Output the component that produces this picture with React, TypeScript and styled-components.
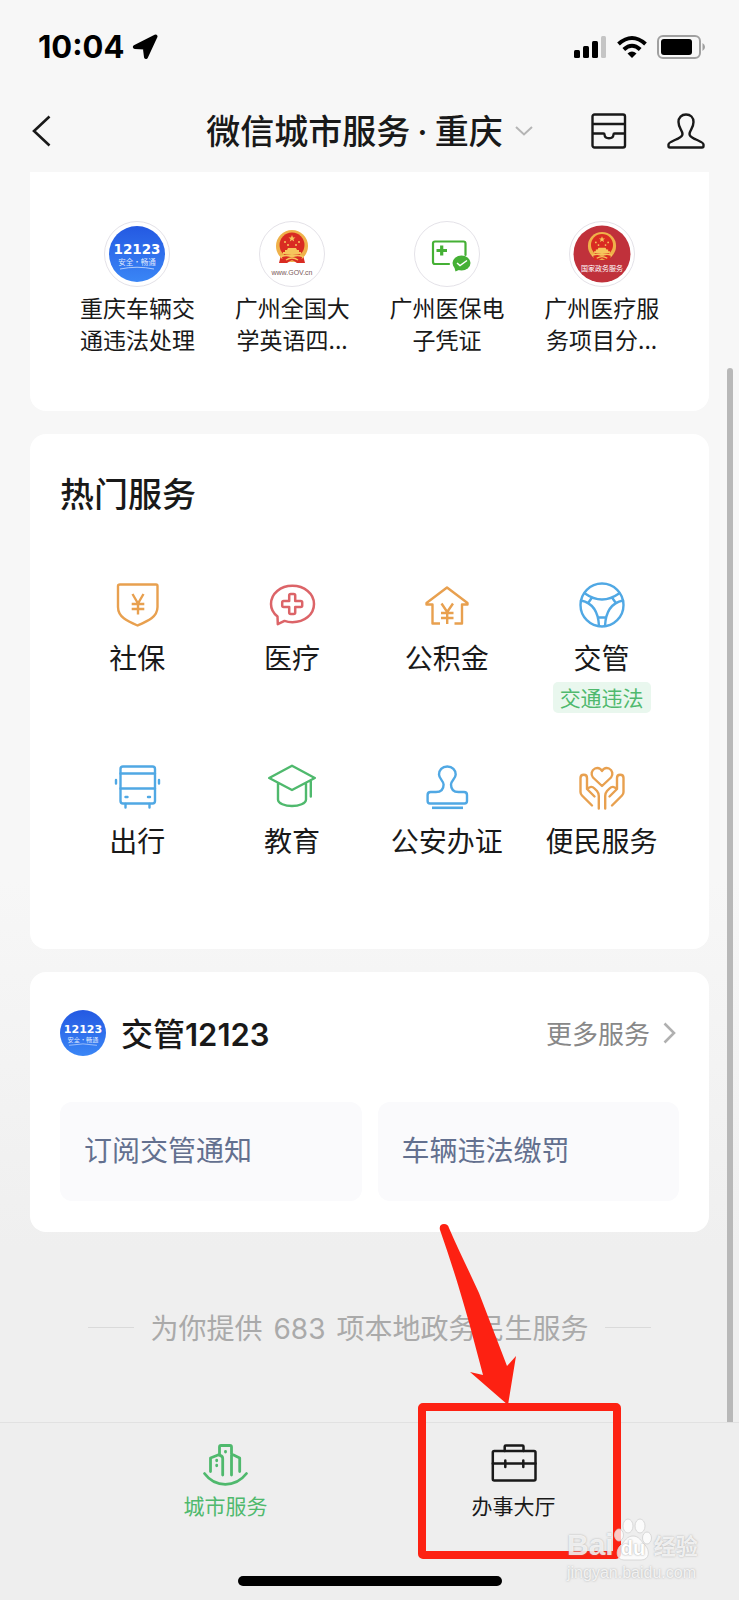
import React from 'react';
import styled, { createGlobalStyle } from 'styled-components';

const cjk = "'Noto Sans CJK SC', 'Liberation Sans', sans-serif";
const latin = "Inter, 'Noto Sans CJK SC', sans-serif";

const colors = {
  ink: '#191919',
  orange: '#e8a04f',
  red: '#dc6468',
  blue: '#50a8e4',
  green: '#4fb96d',
  mark: '#fd2112',
};

const GlobalStyle = createGlobalStyle`
  * { box-sizing: border-box; }
  body { margin: 0; background: #eeeeee; color: ${colors.ink}; font-family: ${cjk}; }
  button { border: 0; padding: 0; margin: 0; background: none; color: inherit; font: inherit; cursor: pointer; }
  a { color: inherit; text-decoration: none; }
  h1, h2, p, ul { margin: 0; padding: 0; }
  ul { list-style: none; }
  svg { display: block; flex: none; }
`;

const Page = styled.div`
  display: flex;
  flex-direction: column;
  min-height: 100vh;
  overflow: hidden;
  background: linear-gradient(#f7f7f7 0, #f7f7f7 55%, #efefef 78%, #efefef 100%);
`;

const StatusBar = styled.div`
  display: flex;
  align-items: center;
  height: 94px;
  padding: 0 34px 0 38px;
`;

const Clock = styled.time`
  font: 700 31px/36px ${latin};
  color: #000;
  margin-right: 7px;
`;

const StatusIcons = styled.div`
  display: flex;
  align-items: center;
  gap: 10px;
  margin-left: auto;
`;

const NavBar = styled.header`
  display: grid;
  grid-template-columns: 1fr auto 1fr;
  align-items: center;
  height: 78px;
  padding: 0 32px 4px;
`;

const NavTitle = styled.h1`
  font-size: 34px;
  line-height: 48px;
  font-weight: 500;
  padding-bottom: 2px;
  span { font-family: ${latin}; margin: 0 7px; line-height: 1; }
`;

const CityButton = styled.button`
  display: flex;
  align-items: center;
  gap: 12px;
`;

const NavActions = styled.div`
  display: flex;
  justify-content: flex-end;
  gap: 40px;
`;

const Content = styled.main`
  position: relative;
  flex: 1;
  padding: 0 30px;
`;

const ScrollThumb = styled.div`
  position: absolute;
  top: 196px;
  bottom: 0;
  right: 6px;
  width: 6px;
  border-radius: 3px 3px 0 0;
  background: #b8b8b8;
`;

const Card = styled.section<{ $pad: string; $flatTop?: boolean }>`
  padding: ${p => p.$pad};
  border-radius: ${p => (p.$flatTop ? '0 0 16px 16px' : '16px')};
  background: #fff;
  & + & { margin-top: 23px; }
`;

const CardTitle = styled.h2`
  font-size: 34px;
  line-height: 48px;
  font-weight: 500;
`;

const Grid = styled.ul`
  display: grid;
  grid-template-columns: repeat(4, 1fr);
  row-gap: 50px;
`;

const HotGrid = styled(Grid)`
  margin-top: 63px;
`;

const Entry = styled.a`
  display: flex;
  flex-direction: column;
  align-items: center;
`;

const RecentLabel = styled.span`
  width: 116px;
  margin-top: 4px;
  font-size: 23px;
  line-height: 32px;
  text-align: center;
`;

const HotLabel = styled.span`
  margin-top: 11px;
  font-size: 28px;
  line-height: 36px;
  white-space: nowrap;
`;

const Tag = styled.span`
  margin-top: 7px;
  padding: 0 7px 1px;
  border-radius: 5px;
  background: #e9f7ee;
  color: ${colors.green};
  font-size: 21px;
  line-height: 30px;
`;

const ServiceHeader = styled.div`
  display: flex;
  align-items: center;
  gap: 15px;
  height: 46px;
`;

const ServiceTitle = styled.h2`
  padding-bottom: 2px;
  font-size: 32px;
  line-height: 44px;
  font-weight: 500;
  span { font-family: ${latin}; font-weight: 600; font-size: 31px; line-height: 1; }
`;

const MoreLink = styled.a`
  display: flex;
  align-items: center;
  gap: 13px;
  margin-left: auto;
  color: #888;
  font-size: 26px;
  line-height: 36px;
`;

const Shortcuts = styled.div`
  display: grid;
  grid-template-columns: 1fr 1fr;
  gap: 16px;
  margin-top: 46px;
`;

const Shortcut = styled.button`
  padding: 27px 24px 32px;
  border-radius: 12px;
  background: #fafafc;
  color: #63708f;
  font-size: 28px;
  line-height: 40px;
  text-align: left;
`;

const Summary = styled.p`
  display: flex;
  align-items: center;
  justify-content: center;
  gap: 16px;
  padding: 75px 0;
  color: #aaa;
  font-size: 28px;
  line-height: 40px;
  white-space: nowrap;
  &::before, &::after { content: ''; width: 46px; height: 1px; background: #dadada; }
  b { font-family: ${latin}; font-weight: 400; line-height: 1; margin: 0 11px; }
`;

const TabBar = styled.nav`
  position: relative;
  display: flex;
  flex-direction: column;
  align-items: center;
  justify-content: space-between;
  height: 178px;
  padding: 18px 0 14px;
  border-top: 1px solid #e1e1e1;
  background: #eeeeee;
`;

const Tabs = styled.div`
  display: grid;
  grid-template-columns: 1fr 1fr;
  width: 78%;
`;

const TabSlot = styled.div`
  position: relative;
  display: flex;
  justify-content: center;
`;

const Tab = styled.button<{ $active?: boolean }>`
  display: flex;
  flex-direction: column;
  align-items: center;
  gap: 4px;
  color: ${p => (p.$active ? colors.green : colors.ink)};
  font-size: 21px;
  line-height: 24px;
`;

const HomeIndicator = styled.div`
  width: 264px;
  height: 10px;
  border-radius: 5px;
  background: #000;
`;

const Pointer = styled.svg`
  position: absolute;
  left: 50%;
  bottom: -42px;
  margin-left: -97px;
  pointer-events: none;
`;

const Watermark = styled.div`
  position: absolute;
  right: 36px;
  bottom: 16px;
  width: 136px;
  color: rgba(255, 255, 255, 0.8);
  text-shadow: 0 0 2px rgba(140, 140, 140, 0.7);
  pointer-events: none;
`;

const Brand = styled.div`
  display: flex;
  align-items: flex-end;
  height: 44px;
  font: 700 30px/34px 'Liberation Sans', sans-serif;
`;

const Paw = styled.span`
  position: relative;
  display: block;
  height: 44px;
  b { position: absolute; left: 7px; bottom: 3px; font-size: 20px; line-height: 22px; color: #fff; text-shadow: 0 0 2px #999; }
`;

const BrandName = styled.span`
  margin-left: 2px;
  font: 700 22px/36px ${cjk};
`;

const Site = styled.div`
  font: 400 16px/22px 'Liberation Sans', sans-serif;
`;

type IconProps = { color?: string; width?: number; children: React.ReactNode };

const LineIcon = ({ color = 'currentColor', width = 2.4, children }: IconProps) => (
  <svg width="48" height="48" viewBox="0 0 48 48" fill="none" stroke={color} strokeWidth={width} strokeLinecap="round" strokeLinejoin="round" aria-hidden="true">
    {children}
  </svg>
);

const SocialIcon = () => (
  <LineIcon color={colors.orange}>
    <path d="M7 4.500H43Q44.500 4.500 44.500 6V27C44.500 37 35 41 24.500 45.500C14 41 5 37 5 27V6Q5 4.500 7 4.500Z" />
    <path d="M19.500 14L25 23.500L30.500 14M18.700 24H31.300M18.700 29H31.300M25 23.500V34.500" strokeLinecap="butt" />
  </LineIcon>
);

const MedicalIcon = () => (
  <LineIcon color={colors.red} width={2.5}>
    <path d="M9.500 36.500C5 33 3 28.500 3 24C3 13.500 12.500 5.800 24.400 5.800S46 13.500 46 24S36.500 42.200 24.400 42.200C21.500 42.200 19 41.800 16.500 40.900L9.800 44.200Z" />
    <path d="M21.200 15.500Q21.200 14 22.700 14H25.700Q27.200 14 27.200 15.500V21H32.700Q34.200 21 34.200 22.500V25.500Q34.200 27 32.700 27H27.200V32.500Q27.200 34 25.700 34H22.700Q21.200 34 21.200 32.500V27H15.700Q14.200 27 14.200 25.500V22.500Q14.200 21 15.700 21H21.200Z" />
  </LineIcon>
);

const FundIcon = () => (
  <LineIcon color={colors.orange}>
    <path d="M17 43.500H9.500V24.500H3.500V23L24 7.500L44.500 23V24.500H39V43.500H31.500" strokeLinecap="butt" />
    <path d="M18.500 23.500L24.200 32L30 23.500M18 33H30.500M18 38H30.500M24.200 32V44" strokeLinecap="butt" />
  </LineIcon>
);

const WheelIcon = () => (
  <LineIcon color={colors.blue}>
    <circle cx="24" cy="25" r="21.500" />
    <path d="M7 13.500Q24 25.500 41 13.500M3 20.500Q20 24 21 46M45 20.500Q28 24 27 46M20.500 37.500H27.500M14 17.500L10.500 22.500M34 17.500L37.500 22.500" />
  </LineIcon>
);

const BusIcon = () => (
  <LineIcon color={colors.blue}>
    <rect x="7.500" y="3.500" width="34.500" height="37" rx="2.500" />
    <path d="M7.500 10.500H42M7.500 25.500H42M3 17V20.500M46 17V20.500M12.500 41V44.500M36.500 41V44.500M12.500 34H14.500M35 34H37" />
  </LineIcon>
);

const EducationIcon = () => (
  <LineIcon color={colors.green}>
    <path d="M24 2.800L46.800 15L24 27L1.200 15ZM10 20.500V36.500C10 40.500 17 43 24 43S38 40.500 38 36.500V20.500M42.800 18.500V33.500" />
  </LineIcon>
);

const StampIcon = () => (
  <LineIcon color={colors.blue}>
    <path d="M24.300 3.500C29.500 3.500 32.700 7 32.700 11.500C32.700 15.500 28 18 28 21.500C28 26.500 31 29 35.500 29H41Q44 29 44 32V38Q44 40.500 41.500 40.500H7Q4.600 40.500 4.600 38V32Q4.600 29 7.600 29H13C17.500 29 20.600 26.500 20.600 21.500C20.600 18 16 15.500 16 11.500C16 7 19 3.500 24.300 3.500Z" />
    <path d="M9 44.800H40" strokeLinecap="butt" strokeWidth="2.600" />
  </LineIcon>
);

const CareIcon = () => (
  <LineIcon color={colors.orange}>
    <path d="M24 23L15 14.500C12.500 11.500 13.500 7 17 5.500C20 4.300 22.500 5.500 24 8C25.500 5.500 28 4.300 31 5.500C34.500 7 35.500 11.500 33 14.500Z" />
    <path d="M14 42.500L4 32.500Q2.500 31 2.500 29V15Q2.500 11.800 5.800 11.800Q9 11.800 9 15V26L16.500 33.500M9.500 26Q13 22 16.500 25.500L19 28Q20.800 30 20.800 33V45.500" />
    <path d="M34 42.500L44 32.500Q45.500 31 45.500 29V15Q45.500 11.800 42.200 11.800Q39 11.800 39 15V26L31.500 33.500M38.500 26Q35 22 31.500 25.500L29 28Q27.200 30 27.200 33V45.500" />
  </LineIcon>
);

const CityIcon = () => (
  <LineIcon width={2.8}>
    <path d="M3.500 32.500Q11.500 43.300 24.300 43.300T45.500 32.500" />
    <path d="M21.700 34V17.500Q21.700 15 19 14.500L17 14L9.500 17V30.500M18.500 13.500V6Q18.500 4.500 20 4.500H29Q30.500 4.500 30.500 6V34M30.500 13L38.700 17V30.500" />
    <path d="M24.500 10.300V11M15.700 19.200V19.800M15.700 24.200V24.800" />
  </LineIcon>
);

const BriefcaseIcon = () => (
  <LineIcon width={2.5}>
    <rect x="2.800" y="10" width="42.700" height="29.500" rx="1.500" />
    <path d="M14.700 10V5.500Q14.700 4.500 15.700 4.500H32.500Q33.500 4.500 33.500 5.500V10M2.800 22.500H45.500M15.300 19.500V26M33.300 19.500V26" />
  </LineIcon>
);

const TrafficLogo = ({ size }: { size: number }) => (
  <svg width={size} height={size} viewBox="0 0 56 56" role="img" aria-label="交管12123">
    <defs>
      <linearGradient id={`sky${size}`} x1="0" y1="0" x2="0" y2="1">
        <stop offset="0" stopColor="#2459e2" />
        <stop offset="1" stopColor="#3a86f6" />
      </linearGradient>
    </defs>
    <circle cx="28" cy="28" r="28" fill={`url(#sky${size})`} />
    <g fill="#fff" textAnchor="middle">
      <text x="28" y="28" fontFamily="DejaVu Sans" fontWeight="700" fontSize="13.500">12123</text>
      <text x="28" y="39" fontFamily="Noto Sans CJK SC" fontSize="7.500" fillOpacity="0.850">安全·畅通</text>
    </g>
    <path d="M11 43Q28 39.500 45 43" fill="none" stroke="#cfe0ff" strokeWidth="0.800" />
  </svg>
);

const Emblem = ({ x, y, s, base }: { x: number; y: number; s: number; base: string }) => (
  <g transform={`translate(${x} ${y}) scale(${s})`}>
    <path d="M-11 9L-13 17H-5L0 14L5 17H13L11 9Z" fill={base} />
    <circle r="16" fill="#efb14a" />
    <circle cy="-1" r="12.500" fill="#d92b22" />
    <path d="M-9 8V6H-7V4H-5L-4 2H4L5 4H7V6H9V8ZM-12 10Q0 6 12 10L10 13Q0 9 -10 13Z" fill="#f6c65c" />
    <path d="M0 -11L1 -8.500H3.500L1.500 -7L2.200 -4.500L0 -6L-2.200 -4.500L-1.500 -7L-3.500 -8.500H-1Z" fill="#f6c65c" />
    <g fill="#f6c65c"><circle cx="-7" cy="-4" r="1" /><circle cx="-4" cy="-1" r="1" /><circle cx="4" cy="-1" r="1" /><circle cx="7" cy="-4" r="1" /></g>
    <path d="M-10 11Q-4 9 0 12Q4 9 10 11L9 16H4L0 14L-4 16H-9Z" fill="#d92b22" />
    <path d="M-6 14Q0 10 6 14" fill="none" stroke="#f6c65c" strokeWidth="1.500" />
  </g>
);

const Badge = ({ children }: { children: React.ReactNode }) => (
  <svg width="66" height="66" viewBox="0 0 66 66" aria-hidden="true">
    <circle cx="33" cy="33" r="32.500" fill="#fff" stroke="#e4e2e8" />
    {children}
  </svg>
);

const recent = [
  {
    name: '重庆车辆交通违法处理',
    icon: <Badge><svg x="5" y="5" width="56" height="56"><TrafficLogo size={56} /></svg></Badge>,
  },
  {
    name: '广州全国大学英语四...',
    icon: (
      <Badge>
        <Emblem x={33} y={25} s={1} base="#d92b22" />
        <text x="33" y="54" textAnchor="middle" fontFamily="Liberation Sans" fontSize="7" fill="#7a5a5a">www.GOV.cn</text>
      </Badge>
    ),
  },
  {
    name: '广州医保电子凭证',
    icon: (
      <Badge>
        <g fill="none" stroke="#45b035" strokeWidth="2.200" strokeLinecap="round">
          <path d="M35 43H21Q19 43 19 41V22.500Q19 20.500 21 20.500H49.500Q51.500 20.500 51.500 22.500V34" />
          <path d="M22.500 29.500H33M27.700 24.500V34.500" strokeWidth="3.200" strokeLinecap="butt" />
        </g>
        <ellipse cx="47.500" cy="42" rx="9" ry="7.500" fill="#45b035" />
        <path d="M40 45L41.500 50.500L47 48Z" fill="#45b035" />
        <path d="M43 42L46 44.500L53 39.500" fill="none" stroke="#fff" strokeWidth="1.500" />
      </Badge>
    ),
  },
  {
    name: '广州医疗服务项目分...',
    icon: (
      <Badge>
        <circle cx="33" cy="33" r="28.500" fill="#c0313b" />
        <Emblem x={33} y={25} s={0.88} base="#c0313b" />
        <text x="33" y="49.500" textAnchor="middle" fontFamily="Noto Sans CJK SC" fontSize="7" fill="#fff">国家政务服务</text>
      </Badge>
    ),
  },
];

const hot = [
  { name: '社保', icon: <SocialIcon /> },
  { name: '医疗', icon: <MedicalIcon /> },
  { name: '公积金', icon: <FundIcon /> },
  { name: '交管', icon: <WheelIcon />, tag: '交通违法' },
  { name: '出行', icon: <BusIcon /> },
  { name: '教育', icon: <EducationIcon /> },
  { name: '公安办证', icon: <StampIcon /> },
  { name: '便民服务', icon: <CareIcon /> },
];

export default function App() {
  return (
    <Page lang="zh-CN">
      <GlobalStyle />
      <StatusBar>
        <Clock>10:04</Clock>
        <svg width="26" height="26" viewBox="0 0 26 26" aria-hidden="true">
          <path d="M23.500 2.500L14 23L12.800 13.600L2.800 13Z" fill="#000" stroke="#000" strokeWidth="4" strokeLinejoin="round" />
        </svg>
        <StatusIcons>
          <svg width="33" height="22" viewBox="0 0 33 22" aria-hidden="true">
            <rect x="0" y="14" width="6" height="8" rx="1.500" />
            <rect x="9" y="10" width="6" height="12" rx="1.500" />
            <rect x="18" y="5" width="6" height="17" rx="1.500" />
            <rect x="27" y="0" width="5" height="22" rx="1.500" fill="#c5c5c5" />
          </svg>
          <svg width="30" height="24" viewBox="0 0 30 24" fill="none" stroke="#000" strokeWidth="4" aria-hidden="true">
            <path d="M1.500 9Q15 -3 28.500 9M6.800 14.500Q15 7 23.200 14.500" />
            <path d="M15 23L10.500 18.500Q15 14.500 19.500 18.500Z" fill="#000" stroke="none" />
          </svg>
          <svg width="48" height="24" viewBox="0 0 48 24" aria-hidden="true">
            <rect x="1" y="1" width="42" height="22" rx="5" fill="none" stroke="#a0a0a0" strokeWidth="2" />
            <rect x="4" y="4" width="31" height="16" rx="3" />
            <path d="M45.500 8Q48 9.500 48 12T45.500 16Z" fill="#a0a0a0" />
          </svg>
        </StatusIcons>
      </StatusBar>

      <NavBar>
        <button aria-label="返回">
          <svg width="20" height="32" viewBox="0 0 20 32" fill="none" stroke={colors.ink} strokeWidth="2.600" aria-hidden="true">
            <path d="M17.500 1.500L2 16L17.500 30.500" />
          </svg>
        </button>
        <CityButton>
          <NavTitle>微信城市服务<span>·</span>重庆</NavTitle>
          <svg width="18" height="10" viewBox="0 0 18 10" fill="none" stroke="#b5b5b5" strokeWidth="2" aria-hidden="true">
            <path d="M1 1L9 8.500L17 1" />
          </svg>
        </CityButton>
        <NavActions>
          <button aria-label="卡包">
            <svg width="36" height="36" viewBox="0 0 36 36" fill="none" stroke={colors.ink} strokeWidth="2.400" strokeLinejoin="round" aria-hidden="true">
              <rect x="1.500" y="1.500" width="32.500" height="33" rx="2" />
              <path d="M2 11H34M2 20.500H12.500Q13.500 20.500 13.500 21.500Q13.800 25.300 18 25.300T22.500 21.500Q22.500 20.500 23.500 20.500H34" />
            </svg>
          </button>
          <button aria-label="我的">
            <svg width="40" height="36" viewBox="0 0 40 36" fill="none" stroke={colors.ink} strokeWidth="2.400" strokeLinejoin="round" aria-hidden="true">
              <path d="M19 1.500C23.500 1.500 26.500 4.500 26.500 9C26.500 15.500 22.500 17 22.500 21C22.500 24 25 24.500 29 26.500C33 28.500 36.500 29.500 36.500 31.500V33Q36.500 34.500 35 34.500H3Q1.500 34.500 1.500 33V31.500C1.500 29.500 5 28.500 9 26.500C13 24.500 15.500 24 15.500 21C15.500 17 11.500 15.500 11.500 9C11.500 4.500 14.500 1.500 19 1.500Z" />
            </svg>
          </button>
        </NavActions>
      </NavBar>

      <Content>
        <Card $pad="49px 30px 56px" $flatTop>
          <Grid>
            {recent.map(item => (
              <li key={item.name}>
                <Entry href="#">
                  {item.icon}
                  <RecentLabel>{item.name}</RecentLabel>
                </Entry>
              </li>
            ))}
          </Grid>
        </Card>

        <Card $pad="35px 30px 91px">
          <CardTitle>热门服务</CardTitle>
          <HotGrid>
            {hot.map(item => (
              <li key={item.name}>
                <Entry href="#">
                  {item.icon}
                  <HotLabel>{item.name}</HotLabel>
                  {item.tag && <Tag>{item.tag}</Tag>}
                </Entry>
              </li>
            ))}
          </HotGrid>
        </Card>

        <Card $pad="38px 30px 31px">
          <ServiceHeader>
            <TrafficLogo size={46} />
            <ServiceTitle>交管<span>12123</span></ServiceTitle>
            <MoreLink href="#">
              更多服务
              <svg width="16" height="22" viewBox="0 0 16 22" fill="none" stroke="#b0b0b0" strokeWidth="2.600" aria-hidden="true">
                <path d="M1.500 1.500L11 11L1.500 20.500" />
              </svg>
            </MoreLink>
          </ServiceHeader>
          <Shortcuts>
            <Shortcut>订阅交管通知</Shortcut>
            <Shortcut>车辆违法缴罚</Shortcut>
          </Shortcuts>
        </Card>

        <Summary>
          <span>为你提供<b>683</b>项本地政务民生服务</span>
        </Summary>
        <ScrollThumb />
      </Content>

      <TabBar>
        <Tabs>
          <TabSlot>
            <Tab $active><CityIcon />城市服务</Tab>
          </TabSlot>
          <TabSlot>
            <Tab><BriefcaseIcon />办事大厅</Tab>
            <Pointer width="204" height="338" viewBox="0 0 204 338" aria-hidden="true">
              <rect x="5" y="186" width="195" height="148" rx="1" fill="none" stroke={colors.mark} strokeWidth="8" strokeLinejoin="round" />
              <path d="M23 9C22 5 24 3 27 3C30 3 31 4 32 7C42 30 52 50 62 72L90 145L99 135L91 184L53 151L66 154L53 105C46 80 38 52 23 9Z" fill={colors.mark} />
            </Pointer>
          </TabSlot>
        </Tabs>
        <HomeIndicator />
        <Watermark>
          <Brand>
            <span>Bai</span>
            <Paw>
              <svg width="38" height="44" viewBox="0 0 38 44" fill="#fff" fillOpacity="0.750" stroke="#d0d0d0" strokeWidth="0.800" aria-hidden="true">
                <ellipse cx="5" cy="17" rx="4.500" ry="6" />
                <ellipse cx="14" cy="8" rx="5" ry="7" />
                <ellipse cx="26" cy="8" rx="5" ry="7" />
                <ellipse cx="33" cy="20" rx="4.500" ry="6" />
                <path d="M19 18C25 18 27 23 31 27C36 32 36 42 27 42H10C2 42 1 32 7 27C11 23 13 18 19 18Z" />
              </svg>
              <b>du</b>
            </Paw>
            <BrandName>经验</BrandName>
          </Brand>
          <Site>jingyan.baidu.com</Site>
        </Watermark>
      </TabBar>
    </Page>
  );
}
